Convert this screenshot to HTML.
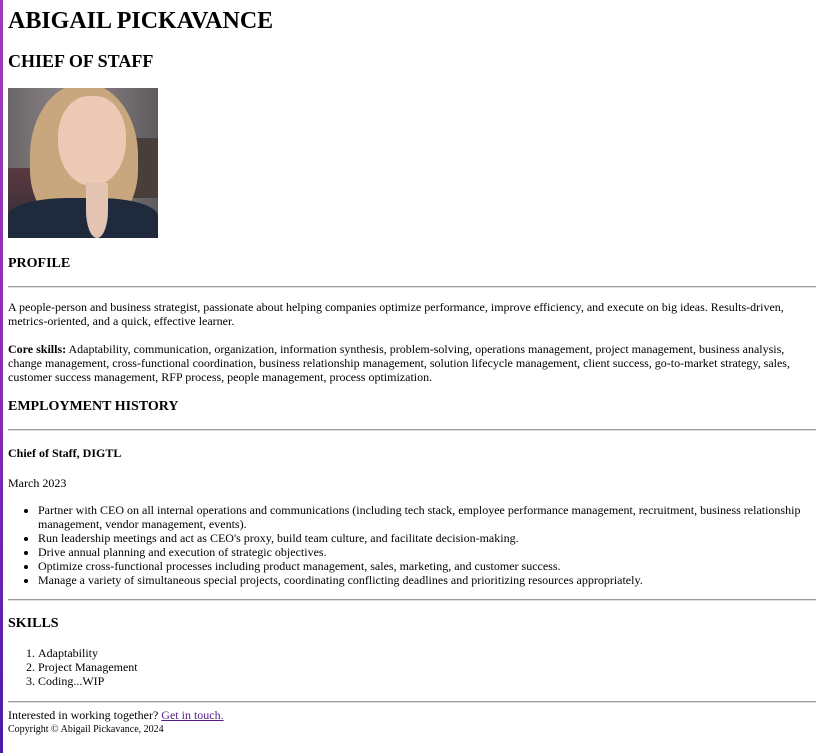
<!DOCTYPE html>
<html><head><meta charset="utf-8"><style>
html,body{margin:0;padding:0;background:#fff}
body{font-family:"Liberation Serif","Times New Roman",serif;font-size:12px;line-height:14px;color:#000;width:821px;height:753px;overflow:hidden;position:relative}
.bar{position:absolute;left:0;top:0;width:3px;height:753px;background:linear-gradient(#a13ab8,#8a2cb8 50%,#4a1aa8)}
.w{position:absolute;left:8px;right:5px;top:0}
div,p,h1,h2,h3,ul,ol{margin:0;padding:0}
h1{font-size:24px;line-height:30px;margin-top:6px}
h2{font-size:18px;line-height:22px;margin-top:14px}
h3{font-size:14px;line-height:18px}
.ph{margin-top:16px;width:150px;height:150px;position:relative;overflow:hidden;background:linear-gradient(90deg,#6a6668,#8b8486 40%,#7a7476 70%,#5d5a5e)}
.hr{height:1px;background:#9a9a9a;border-bottom:1px solid #e0e0e0}
ul,ol{padding-left:30px}
a{color:#551a8b}
</style></head><body>
<div class="bar"></div>
<div class="w">
<h1>ABIGAIL PICKAVANCE</h1>
<h2>CHIEF OF STAFF</h2>
<div class="ph">
<div style="position:absolute;left:0;top:80px;width:40px;height:50px;background:linear-gradient(#5a3a40,#3a3038)"></div>
<div style="position:absolute;left:120px;top:50px;width:30px;height:60px;background:#4a3e3a"></div>
<div style="position:absolute;left:22px;top:-5px;width:108px;height:145px;border-radius:50% 50% 40% 40%;background:#c9a77e"></div>
<div style="position:absolute;left:50px;top:8px;width:68px;height:90px;border-radius:45% 45% 50% 50%;background:#ecc9b4"></div>
<div style="position:absolute;left:0;top:110px;width:150px;height:45px;border-radius:40% 40% 0 0;background:#1f2b3c"></div>
<div style="position:absolute;left:78px;top:95px;width:22px;height:55px;background:#e3c4b3;border-radius:0 0 50% 50%"></div>
</div>
<h3 style="margin-top:17px">PROFILE</h3>
<div class="hr" style="margin-top:13px"></div>
<p style="margin-top:12px">A people-person and business strategist, passionate about helping companies optimize performance, improve efficiency, and execute on big ideas. Results-driven, metrics-oriented, and a quick, effective learner.</p>
<p style="margin-top:14px"><b>Core skills:</b> Adaptability, communication, organization, information synthesis, problem-solving, operations management, project management, business analysis, change management, cross-functional coordination, business relationship management, solution lifecycle management, client success, go-to-market strategy, sales, customer success management, RFP process, people management, process optimization.</p>
<h3 style="margin-top:14px">EMPLOYMENT HISTORY</h3>
<div class="hr" style="margin-top:13px"></div>
<p style="margin-top:15px"><b>Chief of Staff, DIGTL</b></p>
<p style="margin-top:16px">March 2023</p>
<ul style="margin-top:13px">
<li>Partner with CEO on all internal operations and communications (including tech stack, employee performance management, recruitment, business relationship management, vendor management, events).</li>
<li>Run leadership meetings and act as CEO's proxy, build team culture, and facilitate decision-making.</li>
<li>Drive annual planning and execution of strategic objectives.</li>
<li>Optimize cross-functional processes including product management, sales, marketing, and customer success.</li>
<li>Manage a variety of simultaneous special projects, coordinating conflicting deadlines and prioritizing resources appropriately.</li>
</ul>
<div class="hr" style="margin-top:12px"></div>
<h3 style="margin-top:14px">SKILLS</h3>
<ol style="margin-top:13px">
<li>Adaptability</li>
<li>Project Management</li>
<li>Coding...WIP</li>
</ol>
<div class="hr" style="margin-top:13px"></div>
<p style="margin-top:5px">Interested in working together? <a href="#">Get in touch.</a></p>
<p style="margin-top:2px;font-size:10px;line-height:12px">Copyright © Abigail Pickavance, 2024</p>
</div>
</body></html>
